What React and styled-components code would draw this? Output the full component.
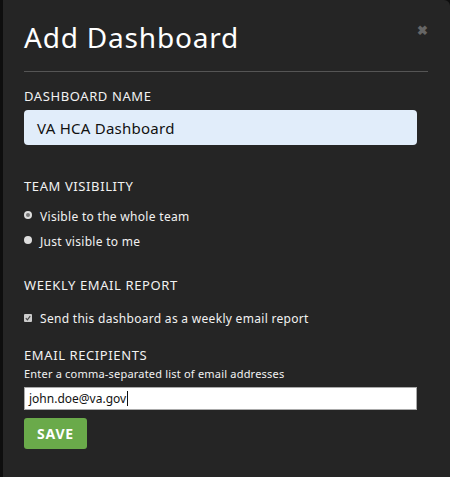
import React from "react";
import styled, { createGlobalStyle } from "styled-components";

const Global = createGlobalStyle`
  html, body { margin: 0; padding: 0; background: #0e0e0e; }
  body { font-family: "Noto Sans", "Liberation Sans", sans-serif; }
  #root { height: 477px; overflow: hidden; }
`;

const Modal = styled.div`
  margin-left: 3px;
  height: 477px;
  box-sizing: border-box;
  background: #252525;
  border-top-right-radius: 6px;
  padding: 0 22px 0 21px;
  position: relative;
  display: flex;
  flex-direction: column;
  color: #fff;
`;

const Header = styled.div`
  border-bottom: 1px solid #555;
  padding: 18px 0 15px 0;
`;

const Title = styled.h1`
  margin: 0;
  font-family: "Noto Sans", sans-serif;
  font-weight: 400;
  font-size: 28px;
  line-height: 38px;
  letter-spacing: 0.8px;
  color: #fff;
`;

const Close = styled.span`
  position: absolute;
  top: 24px;
  right: 22px;
  color: #666;
  font-size: 13px;
  font-weight: 700;
  line-height: 1;
`;

const Section = styled.div`
  display: flex;
  flex-direction: column;
  margin-top: ${(p) => p.$mt}px;
`;

const Label = styled.div`
  font-size: 13px;
  line-height: 16px;
  text-transform: uppercase;
  color: #f2f2f2;
  letter-spacing: 0.6px;
`;

const NameInput = styled.div`
  margin-top: 6px;
  height: 35px;
  width: 393px;
  box-sizing: border-box;
  background: #e1edfa;
  border-radius: 4px;
  color: #111;
  font-size: 15px;
  letter-spacing: 0.25px;
  padding: 0 13px;
  display: flex;
  align-items: center;
`;

const OptionList = styled.div`
  display: flex;
  flex-direction: column;
  gap: 9px;
  margin-top: ${(p) => p.$mt}px;
`;

const Option = styled.label`
  display: flex;
  align-items: center;
  gap: 8px;
  font-size: 12px;
  line-height: 16px;
  letter-spacing: 0.3px;
  color: #f2f2f2;
`;

const Radio = styled.span`
  width: 8px;
  height: 8px;
  border-radius: 50%;
  background: #ddd;
  position: relative;
  flex: none;
  margin-top: -4px;
  &::after {
    content: "";
    display: ${(p) => (p.$checked ? "block" : "none")};
    position: absolute;
    left: 2px;
    top: 2px;
    width: 4px;
    height: 4px;
    border-radius: 50%;
    background: #777;
  }
`;

const Check = styled.span`
  width: 8px;
  height: 8px;
  border-radius: 1px;
  background: #ccc;
  flex: none;
  display: flex;
  align-items: center;
  justify-content: center;
  margin-top: -3px;
`;

const Hint = styled.div`
  font-size: 11px;
  line-height: 14px;
  letter-spacing: 0.2px;
  color: #f2f2f2;
  margin-top: 4px;
`;

const EmailInput = styled.div`
  margin-top: 6px;
  height: 23px;
  width: 393px;
  box-sizing: border-box;
  background: #fff;
  border: 1px solid #aaa;
  color: #111;
  font-size: 12px;
  padding: 0 4px;
  display: flex;
  align-items: center;
`;

const Caret = styled.span`
  display: inline-block;
  width: 1px;
  height: 15px;
  background: #111;
  margin-left: 1px;
`;

const SaveButton = styled.button`
  margin-top: 8px;
  align-self: flex-start;
  width: 63px;
  height: 31px;
  border: none;
  border-radius: 3px;
  background: #6aaa4a;
  color: #fff;
  font-family: "Noto Sans", sans-serif;
  font-weight: 700;
  font-size: 14px;
  letter-spacing: 0.8px;
  padding: 0;
`;

export default function App() {
  return (
    <>
      <Global />
      <Modal>
        <Close>✖</Close>
        <Header>
          <Title>Add Dashboard</Title>
        </Header>
        <Section $mt={16}>
          <Label>Dashboard Name</Label>
          <NameInput>VA HCA Dashboard</NameInput>
        </Section>
        <Section $mt={33}>
          <Label>Team Visibility</Label>
          <OptionList $mt={15}>
            <Option>
              <Radio $checked />
              Visible to the whole team
            </Option>
            <Option>
              <Radio />
              Just visible to me
            </Option>
          </OptionList>
        </Section>
        <Section $mt={27}>
          <Label>Weekly Email Report</Label>
          <OptionList $mt={18}>
            <Option>
              <Check>
                <svg width="6" height="6" viewBox="0 0 6 6">
                  <path d="M0.8 3.2 L2.4 4.8 L5.2 1.2" fill="none" stroke="#444" strokeWidth="1.2" />
                </svg>
              </Check>
              Send this dashboard as a weekly email report
            </Option>
          </OptionList>
        </Section>
        <Section $mt={20}>
          <Label>Email Recipients</Label>
          <Hint>Enter a comma-separated list of email addresses</Hint>
          <EmailInput>
            john.doe@va.gov
            <Caret />
          </EmailInput>
          <SaveButton>SAVE</SaveButton>
        </Section>
      </Modal>
    </>
  );
}
